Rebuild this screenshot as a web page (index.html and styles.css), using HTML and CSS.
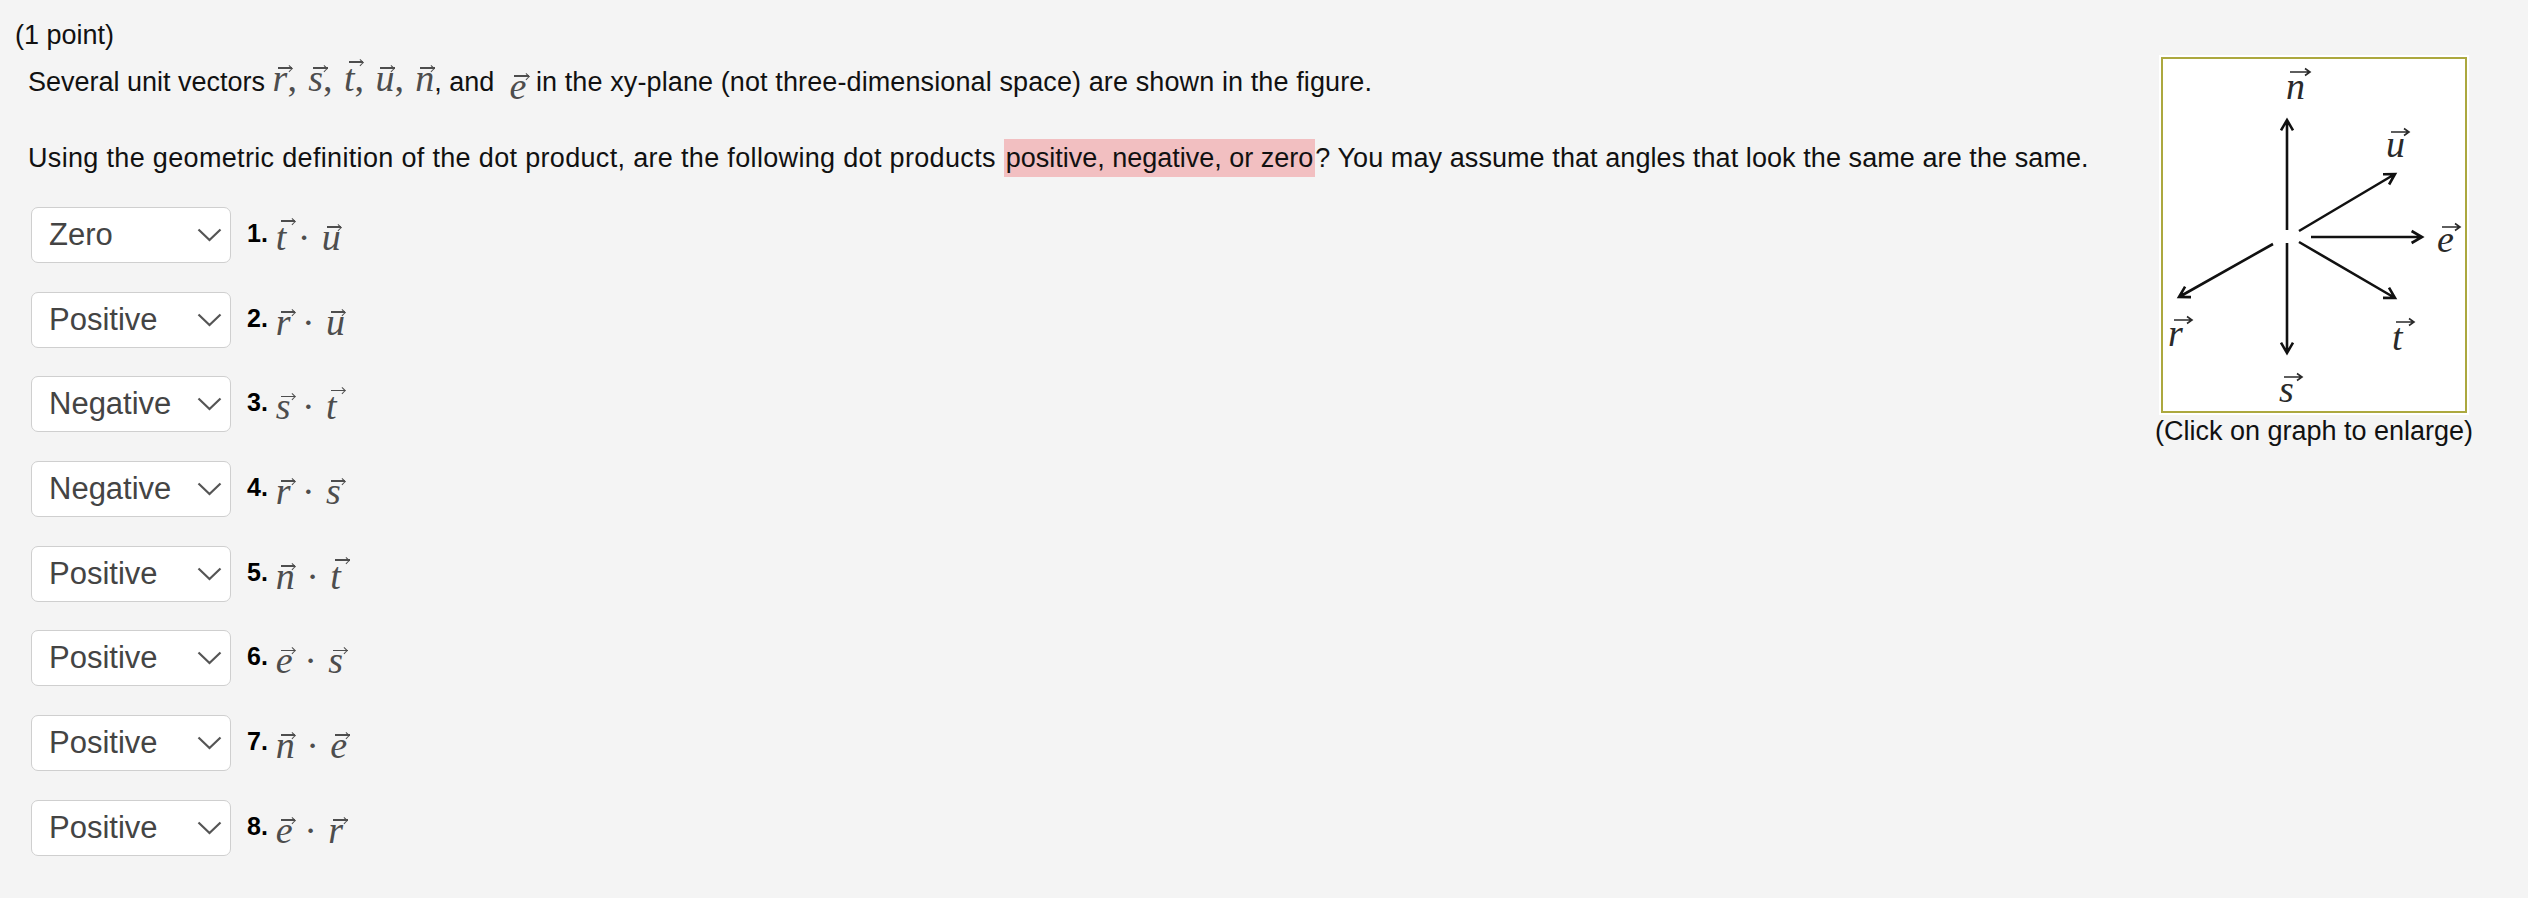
FILE: index.html
```html
<!DOCTYPE html>
<html lang="en">
<head>
<meta charset="utf-8">
<title>Dot products</title>
<link rel="stylesheet" href="styles.css">
</head>
<body>
<div class="page">
  <div class="points">(1 point)</div>
  <div class="problem">
    <div class="main">
      <p class="intro">Several unit vectors <span class="m"><span class="v">r</span><span class="c">,</span><span class="v">s</span><span class="c">,</span><span class="v vt">t</span><span class="c">,</span><span class="v">u</span><span class="c">,</span><span class="v">n</span></span>, and <span class="m low"><span class="v">e</span></span> <span class="tail">in the xy-plane (not three-dimensional space) are shown in the figure.</span></p>
      <p class="question"><span class="lead">Using the geometric definition of the dot product, are the following dot products </span><span class="hl">positive, negative, or zero</span><span class="tail">? You may assume that angles that look the same are the same.</span></p>
      <div class="answers">
        <div class="row">
          <div class="select"><span>Zero</span><svg class="chev" width="25" height="14" viewBox="0 0 25 14"><polyline points="1.5,1.5 12.5,12 23.5,1.5"/></svg></div>
          <div class="expr"><span class="num">1.</span><span class="m"><span class="v vt">t</span><span class="dot">·</span><span class="v">u</span></span></div>
        </div>
        <div class="row">
          <div class="select"><span>Positive</span><svg class="chev" width="25" height="14" viewBox="0 0 25 14"><polyline points="1.5,1.5 12.5,12 23.5,1.5"/></svg></div>
          <div class="expr"><span class="num">2.</span><span class="m"><span class="v">r</span><span class="dot">·</span><span class="v">u</span></span></div>
        </div>
        <div class="row">
          <div class="select"><span>Negative</span><svg class="chev" width="25" height="14" viewBox="0 0 25 14"><polyline points="1.5,1.5 12.5,12 23.5,1.5"/></svg></div>
          <div class="expr"><span class="num">3.</span><span class="m"><span class="v">s</span><span class="dot">·</span><span class="v vt">t</span></span></div>
        </div>
        <div class="row">
          <div class="select"><span>Negative</span><svg class="chev" width="25" height="14" viewBox="0 0 25 14"><polyline points="1.5,1.5 12.5,12 23.5,1.5"/></svg></div>
          <div class="expr"><span class="num">4.</span><span class="m"><span class="v">r</span><span class="dot">·</span><span class="v">s</span></span></div>
        </div>
        <div class="row">
          <div class="select"><span>Positive</span><svg class="chev" width="25" height="14" viewBox="0 0 25 14"><polyline points="1.5,1.5 12.5,12 23.5,1.5"/></svg></div>
          <div class="expr"><span class="num">5.</span><span class="m"><span class="v">n</span><span class="dot">·</span><span class="v vt">t</span></span></div>
        </div>
        <div class="row">
          <div class="select"><span>Positive</span><svg class="chev" width="25" height="14" viewBox="0 0 25 14"><polyline points="1.5,1.5 12.5,12 23.5,1.5"/></svg></div>
          <div class="expr"><span class="num">6.</span><span class="m"><span class="v">e</span><span class="dot">·</span><span class="v">s</span></span></div>
        </div>
        <div class="row">
          <div class="select"><span>Positive</span><svg class="chev" width="25" height="14" viewBox="0 0 25 14"><polyline points="1.5,1.5 12.5,12 23.5,1.5"/></svg></div>
          <div class="expr"><span class="num">7.</span><span class="m"><span class="v">n</span><span class="dot">·</span><span class="v">e</span></span></div>
        </div>
        <div class="row">
          <div class="select"><span>Positive</span><svg class="chev" width="25" height="14" viewBox="0 0 25 14"><polyline points="1.5,1.5 12.5,12 23.5,1.5"/></svg></div>
          <div class="expr"><span class="num">8.</span><span class="m"><span class="v">e</span><span class="dot">·</span><span class="v">r</span></span></div>
        </div>
      </div>
    </div>
    <div class="figure">
      <div class="graph">
        <svg width="302" height="352" viewBox="0 0 302 352">
          <g class="arrows">
            <path d="M124 171 V61 M118 71.4 L124 61 L130 71.4"/>
            <path d="M124 184 V294 M118 283.6 L124 294 L130 283.6"/>
            <path d="M136 172 L232 115 M220 115.2 L232 115 L226.1 125.5"/>
            <path d="M148 178 H259 M248.6 172 L259 178 L248.6 184"/>
            <path d="M136 183 L232 239 M226 228.6 L232 239 L220 238.9"/>
            <path d="M110 185 L16 238 M28 238.1 L16 238 L22.1 227.7"/>
          </g>
          <g class="labels">
            <text x="123" y="40">n</text>
            <text x="223" y="98">u</text>
            <text x="274" y="193">e</text>
            <text x="229" y="291">t</text>
            <text x="5" y="287">r</text>
            <text x="116" y="343">s</text>
          </g>
          <g class="label-arrows">
            <path d="M127 13 H147 M142 9.5 L147 13 L142 16.5"/>
            <path d="M228 73 H246 M241 69.5 L246 73 L241 76.5"/>
            <path d="M279 168 H297 M292 164.5 L297 168 L292 171.5"/>
            <path d="M233 263 H251 M246 259.5 L251 263 L246 266.5"/>
            <path d="M11 261 H29 M24 257.5 L29 261 L24 264.5"/>
            <path d="M121 318 H139 M134 314.5 L139 318 L134 321.5"/>
          </g>
        </svg>
      </div>
      <div class="caption">(Click on graph to enlarge)</div>
    </div>
  </div>
</div>
</body>
</html>
```
FILE: styles.css
```css
body {
  margin: 0;
  background: #f4f4f4;
  font-family: "Liberation Sans", Arial, Helvetica, sans-serif;
  color: #111;
}

.page {
  padding: 17px 0 0 15px;
}

.points {
  font-size: 27px;
  line-height: 36px;
}

.problem {
  display: flex;
  align-items: flex-start;
}

.main {
  flex: 1;
  min-width: 0;
  padding-left: 13px;
}

.intro,
.question {
  font-size: 27px;
  line-height: 36px;
  white-space: nowrap;
}

.intro {
  margin: 11px 0 0;
}

.question {
  margin: 40px 0 0;
}

/* compensate for the slightly wider Helvetica Neue metrics of the original */
.intro .tail {
  letter-spacing: 0.11px;
}

.question .lead {
  letter-spacing: 0.33px;
}

.question .tail {
  letter-spacing: 0.08px;
}

.hl {
  background: #f2bfc1;
  padding: 4.4px 2px;
}

.answers {
  margin: 31px 0 0 3px;
  display: flex;
  flex-direction: column;
  gap: 28.7px;
}

.row {
  display: flex;
  align-items: center;
}

.select {
  box-sizing: border-box;
  width: 200px;
  height: 56px;
  display: flex;
  align-items: center;
  justify-content: space-between;
  padding: 0 8px 0 17px;
  background: #fff;
  border: 1px solid #cfcfcf;
  border-radius: 7px;
  font-size: 31px;
  color: #444;
}

.chev {
  display: block;
  flex: none;
}

.chev polyline {
  fill: none;
  stroke: #555;
  stroke-width: 2.2;
}

.expr {
  margin: 0 0 4px 16px;
  font-size: 25px;
  line-height: 30px;
  white-space: nowrap;
}

.num {
  font-weight: bold;
  color: #000;
}

/* math */
.m {
  font-family: "Liberation Serif", "Times New Roman", serif;
  font-size: 38px;
  line-height: 0;
  color: #4d4d4d;
}

.expr .m {
  margin-left: 8px;
  vertical-align: -8px;
}

.m.low {
  margin-left: 0.2em;
  margin-right: 2px;
  vertical-align: -8px;
}

.v {
  position: relative;
  font-style: italic;
}

.v::before {
  content: "";
  position: absolute;
  left: 0.13em;
  width: 0.38em;
  top: 0.27em;
  height: 0.045em;
  background: currentColor;
}

.v::after {
  content: "";
  position: absolute;
  box-sizing: border-box;
  left: 0.37em;
  top: 0.235em;
  width: 0.12em;
  height: 0.12em;
  border-top: 0.045em solid currentColor;
  border-right: 0.045em solid currentColor;
  transform: rotate(45deg);
}

.v.vt::before {
  top: 0.11em;
}

.v.vt::after {
  top: 0.075em;
}

.c {
  font-style: normal;
  margin-right: 0.3em;
}

.dot {
  font-style: normal;
  margin: 0 0.3em;
}

/* figure */
.figure {
  width: 330px;
  margin: 4px 49px 0 0;
  display: flex;
  flex-direction: column;
  align-items: center;
}

.graph {
  box-sizing: border-box;
  width: 306px;
  height: 356px;
  border: 2px solid #aca83f;
  outline: 2px solid #fff;
  background: #fff;
}

.graph svg {
  display: block;
}

.arrows path {
  fill: none;
  stroke: #111;
  stroke-width: 2.6;
}

.labels text {
  font-family: "Liberation Serif", "Times New Roman", serif;
  font-style: italic;
  font-size: 38px;
  fill: #2a2a2a;
}

.label-arrows path {
  fill: none;
  stroke: #2a2a2a;
  stroke-width: 1.6;
}

.caption {
  font-size: 27px;
  line-height: 36px;
  white-space: nowrap;
}
```
